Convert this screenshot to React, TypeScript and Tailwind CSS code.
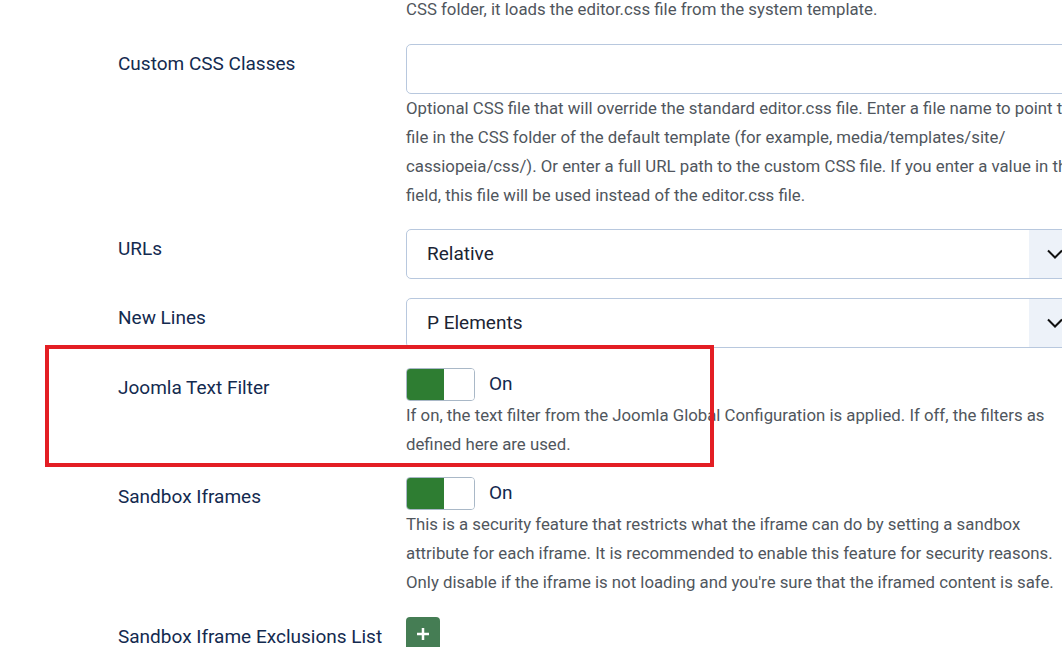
import React from "react";

const font = { fontFamily: "Roboto, 'Noto Sans', sans-serif" };

function Label({ children }: { children: React.ReactNode }) {
  return (
    <div className="w-[406px] shrink-0 whitespace-nowrap pl-[118px] pt-[6px] text-[19px] leading-[28px] text-[#132a4f]">
      {children}
    </div>
  );
}

function Desc({ children, wide = false }: { children: React.ReactNode; wide?: boolean }) {
  return (
    <div className={`${wide ? "w-[682px]" : "w-[678px]"} text-[16.8px] leading-[29px] text-[#50565d]`}>
      {children}
    </div>
  );
}

function Chevron() {
  return (
    <svg width="16" height="10" viewBox="0 0 16 10" fill="none" stroke="#111" strokeWidth="2">
      <path d="M1 1.5l7 7 7-7" />
    </svg>
  );
}

function SelectBox({ value }: { value: string }) {
  return (
    <div className="flex h-[50px] w-full overflow-hidden rounded-[5px] border border-[#b8c8de] bg-white">
      <div className="flex flex-1 items-center pl-[20px] text-[19px] text-[#1b2433]">{value}</div>
      <div className="flex w-[66px] items-center bg-[#edf2f9] pl-[18px]">
        <Chevron />
      </div>
    </div>
  );
}

function Toggle() {
  return (
    <div className="flex items-center gap-[14px]">
      <div className="flex h-[33px] w-[69px] overflow-hidden rounded-[4px] border border-[#a9b8c7]">
        <div className="w-[37px] bg-[#2e7d32]" />
        <div className="flex-1 bg-white" />
      </div>
      <span className="text-[19px] text-[#132a4f]">On</span>
    </div>
  );
}

export default function App() {
  return (
    <div className="relative h-[647px] w-[1062px] overflow-hidden bg-white" style={font}>
      <div className="-mt-[5px] flex w-[1200px] flex-col">
        <div className="flex">
          <div className="w-[406px] shrink-0" />
          <div className="w-[690px] shrink-0">
            <Desc>CSS folder, it loads the editor.css file from the system template.</Desc>
          </div>
        </div>

        <div className="mt-[20px] flex">
          <Label>Custom CSS Classes</Label>
          <div className="w-[690px] shrink-0">
            <div className="h-[50px] w-full rounded-[5px] border border-[#b8c8de] bg-white" />
            <Desc wide>
              Optional CSS file that will override the standard editor.css file. Enter a file name to point to a
              file in the CSS folder of the default template (for example, media/templates/site/ cassiopeia/css/).
              Or enter a full URL path to the custom CSS file. If you enter a value in this field, this file will be
              used instead of the editor.css file.
            </Desc>
          </div>
        </div>

        <div className="mt-[19px] flex">
          <Label>URLs</Label>
          <div className="w-[690px] shrink-0">
            <SelectBox value="Relative" />
          </div>
        </div>

        <div className="mt-[19px] flex">
          <Label>New Lines</Label>
          <div className="w-[690px] shrink-0">
            <SelectBox value="P Elements" />
          </div>
        </div>

        <div className="mt-[20px] flex">
          <Label>Joomla Text Filter</Label>
          <div className="w-[690px] shrink-0">
            <Toggle />
            <Desc>
              If on, the text filter from the Joomla Global Configuration is applied. If off, the filters as defined
              here are used.
            </Desc>
          </div>
        </div>

        <div className="mt-[18px] flex">
          <Label>Sandbox Iframes</Label>
          <div className="w-[690px] shrink-0">
            <Toggle />
            <Desc>
              This is a security feature that restricts what the iframe can do by setting a sandbox attribute for
              each iframe. It is recommended to enable this feature for security reasons. Only disable if the iframe
              is not loading and you're sure that the iframed content is safe.
            </Desc>
          </div>
        </div>

        <div className="mt-[20px] flex">
          <Label>Sandbox Iframe Exclusions List</Label>
          <div className="w-[690px] shrink-0">
            <div className="flex h-[34px] w-[34px] items-center justify-center rounded-[4px] bg-[#457d54]">
              <svg width="14" height="14" viewBox="0 0 14 14" stroke="white" strokeWidth="2.5">
                <path d="M7 1v12M1 7h12" />
              </svg>
            </div>
          </div>
        </div>
      </div>

      <div className="pointer-events-none absolute left-[45px] top-[345px] h-[122px] w-[669px] border-4 border-[#e31e24]" />
    </div>
  );
}
